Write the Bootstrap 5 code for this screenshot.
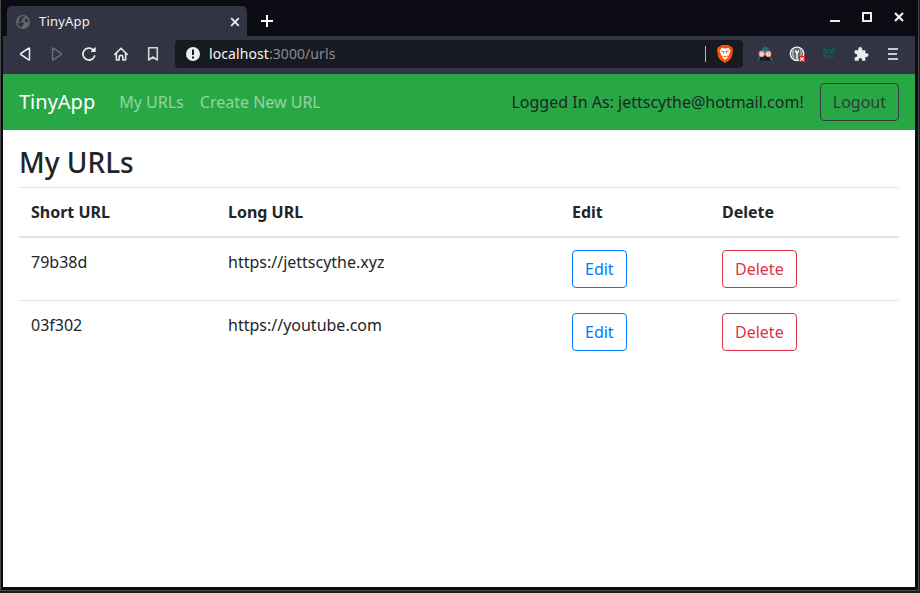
<!DOCTYPE html>
<html lang="en">
<head>
<meta charset="utf-8">
<meta name="viewport" content="width=device-width, initial-scale=1">
<title>TinyApp</title>
<link href="https://cdn.jsdelivr.net/npm/bootstrap@5.3.0/dist/css/bootstrap.min.css" rel="stylesheet">
<style>
body{font-family:"Noto Sans",sans-serif;background:#1c1c1c;color:#212529;line-height:1.5;height:593px;overflow:hidden}
.win{height:591px;width:919px;background:#0b0b14;border:1px solid #48484a;border-top:0;padding:0 3px 3px 2px}
.titlebar{height:36px;padding:6px 10px 0 4px}
.tab{width:240px;height:30px;background:#323443;border-radius:5px 5px 0 0;color:#f2f2f3;font-size:13px;padding:1px 7px 0 9px}
.tabname{padding-left:9px;padding-top:1px;letter-spacing:.2px}
.newtab{margin-left:14px}
.toolbar{height:38px;background:#323443;padding:0 14px 2px}
.address{width:568px;height:28px;background:#181a21;border-radius:4px;margin-left:14px;padding:0 10px 0 11px;font-size:14px;color:#f5f5f6}
.address .url{padding:0 0 1px 9px;letter-spacing:.08px}
.address .dim{color:#8b8c91}
.sep{width:1px;height:16px;background:#b6b6ba;margin-right:11px}
.tools{gap:16px}
svg{display:block;flex:none}
.page{height:513px;background:#fff}
.topnav{height:56px;background:#28a745}
.topnav .navbar-brand{font-size:20px;color:#fff;padding:0;margin-right:16px}
.topnav .nav-link{color:rgba(255,255,255,.5);padding:8px}
.btn{--bs-btn-border-radius:4px;--bs-btn-font-size:16px;--bs-btn-line-height:1.5}
.btn-outline-dark{--bs-btn-color:#343a40;--bs-btn-border-color:#343a40}
.btn-outline-primary{--bs-btn-color:#007bff;--bs-btn-border-color:#007bff}
.title{font-size:28px;font-weight:500;line-height:1.2;margin:0;padding:16px 0 7px;height:57px}
.urls{border-collapse:separate;border-spacing:0;table-layout:fixed;width:880px;--bs-table-color:#212529;--bs-table-bg:#fff}
.urls th,.urls td{padding:12px!important;vertical-align:top;border:0 solid #dee2e6!important}
.urls th{border-width:1px 0 2px!important}
.urls tr+tr td{border-top-width:1px!important}
</style>
<script src="https://cdn.jsdelivr.net/npm/bootstrap@5.3.0/dist/js/bootstrap.bundle.min.js"></script>
</head>
<body>
<div class="win">
  <div class="titlebar d-flex justify-content-between">
    <div class="d-flex">
      <div class="tab d-flex align-items-center">
        <svg width="14" height="14" viewBox="0 0 14 14"><circle cx="7" cy="7" r="7" fill="#65676c"/><path d="M5.8 1.3 8.8 1.5 8.2 3 6.5 3.6 6.7 5 5 6 4.6 7.3 7.4 7.6 8.2 9 6.6 10 6 12.7C3.6 12 1.6 10 1.3 7.3L3.5 8.5 4.2 7.7 2.5 5.8C2.7 3.6 4 2 5.8 1.3ZM9 4.4 11 3.2 12.6 6.5 11 7.8 9.2 6.8 8.3 5.5Z" fill="#323443"/></svg>
        <span class="flex-grow-1 tabname">TinyApp</span>
        <svg width="10" height="10" viewBox="0 0 10 10" stroke="#eeeef0" stroke-width="1.8"><path d="M1.2 1.2 8.8 8.8M8.8 1.2 1.2 8.8"/></svg>
      </div>
      <svg class="align-self-center newtab" width="12" height="12" viewBox="0 0 12 12" stroke="#fff" stroke-width="2"><path d="M6 0V12M0 6H12"/></svg>
    </div>
    <svg width="76" height="22" viewBox="0 0 76 22" stroke="#eeeef2" fill="none" stroke-width="2"><path d="M1 15H11M34 7H42V15H34Z"/><path d="M66 7 74 15M74 7 66 15" stroke-width="2.2"/></svg>
  </div>
  <div class="toolbar d-flex align-items-center">
    <div class="d-flex align-items-center tools">
      <svg width="16" height="16" viewBox="0 0 16 16" fill="none" stroke="#eeeef0" stroke-width="1.5" stroke-linejoin="round"><path d="M12.5 2.4V13.6Q12.5 14.3 11.8 13.8L3.8 8.5Q3.1 8 3.8 7.5L11.8 2.2Q12.5 1.7 12.5 2.4Z"/></svg>
      <svg width="16" height="16" viewBox="0 0 16 16" fill="none" stroke="#6d6e79" stroke-width="1.5" stroke-linejoin="round"><path d="M3.6 2.4V13.6Q3.6 14.3 4.3 13.8L12.2 8.5Q12.9 8 12.2 7.5L4.3 2.2Q3.6 1.7 3.6 2.4Z"/></svg>
      <svg width="16" height="16" viewBox="0 0 16 16" fill="none" stroke="#eeeef0" stroke-width="1.7" stroke-linecap="round"><path d="M12.2 3.8A6 6 0 1 0 13.6 10"/><path d="M10.4 5.5H14.2V2Z" fill="#eeeef0" stroke-width="1"/></svg>
      <svg width="16" height="16" viewBox="0 0 16 16" fill="none" stroke="#e4e4e7" stroke-width="1.6" stroke-linejoin="round" stroke-linecap="round"><path d="M1.8 8.4 8 2.2 14.2 8.4M3.4 7.5V14H6.2V10.8Q6.2 9.4 8 9.4T9.8 10.8V14H12.6V7.5"/></svg>
      <svg width="16" height="16" viewBox="0 0 16 16" fill="none" stroke="#d6d6da" stroke-width="1.6" stroke-linejoin="round"><path d="M3.7 1.8H12.3V14L8 11 3.7 14Z"/></svg>
    </div>
    <div class="address d-flex align-items-center">
      <svg width="14" height="14" viewBox="0 0 14 14"><circle cx="7" cy="7" r="7" fill="#ededee"/><path d="M6 2.5H8V8H6ZM6 9.5H8V11.5H6Z" fill="#181a21"/></svg>
      <div class="flex-grow-1 url">localhost<span class="dim">:3000/urls</span></div>
      <div class="sep"></div>
      <svg width="16" height="18" viewBox="0 0 16 18"><path d="M4.5 0H11.5L13 1.5H14.5L16 4 15 11.5Q14 14.5 8 18 2 14.5 1 11.5L0 4 1.5 1.5H3Z" fill="#fb5304"/><path d="M4.5 3 8 3.6 11.5 3 13.5 6 12 9.4 11.4 11 9.8 10.6 10.8 12.4 8 15 5.2 12.4 6.2 10.6 4.6 11 4 9.4 2.5 6Z" fill="#fff"/><path d="M4.3 6 7 6.6 6.3 8.4M11.7 6 9 6.6 9.7 8.4M6.6 11.6H9.4" stroke="#fb5304" fill="none"/></svg>
    </div>
    <div class="d-flex align-items-center tools ms-auto">
      <svg width="16" height="16" viewBox="0 0 16 16"><path d="M8.5 .5Q11.5 1.4 12.8 5.5L13.5 10 15.8 15H.2L2.5 10 3.2 5.5Q4.5 2 8.5 .5Z" fill="#2b6779"/><path d="M4.5 9H11.5L14 14.8H2Z" fill="#11151d"/><g fill="#fff" stroke="#e58a76" stroke-width="1.3"><circle cx="4.7" cy="8" r="2.5"/><circle cx="11.3" cy="8" r="2.5"/></g><path d="M4.2 8H5.2M10.8 8H11.8" stroke="#333"/><path d="M6 13H10" stroke="#59616a" stroke-dasharray="1 1"/></svg>
      <svg width="16" height="16" viewBox="0 0 16 16"><circle cx="8" cy="7.8" r="6.7" fill="#606368" stroke="#f2f2f2" stroke-width="1.4"/><path d="M4.4 3.5Q2.7 8 5 12.5M11.6 3.5Q13 7 11.4 10" stroke="#aaa" stroke-width="1.6" fill="none"/><path d="M6 6 6.2 3.6 8 5.5 9.8 3.6 10 6 8.8 7.5V13.5H7.2V7.5Z" fill="#eee"/><path d="M10 10H16V16H10Z" fill="#ed1c24"/><path d="M11.3 11.3 14.7 14.7M14.7 11.3 11.3 14.7" stroke="#fff" stroke-width="1.2"/></svg>
      <svg width="16" height="16" viewBox="0 0 16 16" fill="none" stroke="#08805a" stroke-width="1.1" stroke-dasharray="1.3 .9"><path d="M3 7V2.5L6 4.5H10L13 2.5V7M2.8 8.5 4.5 11 8 12.5 11.5 11 13.2 8.5M4.5 6 6.8 7.5M11.5 6 9.2 7.5M6.5 10H9.5"/></svg>
      <svg width="16" height="16" viewBox="0 0 16 16"><path d="M1.7 4.2H5.2V3A2 2 0 0 1 9.2 3V4.2H12.4V7.2H13.6A1.9 1.9 0 0 1 13.6 11H12.4V14.8H9V13.8A1.7 1.7 0 0 0 5.6 13.8V14.8H1.7V11.2H2.5A1.7 1.7 0 0 0 2.5 7.8H1.7Z" fill="#ececee"/></svg>
      <svg width="16" height="16" viewBox="0 0 16 16" stroke="#c9c9cd" stroke-width="2"><path d="M3 3H13M3 8H12M3 13H13"/></svg>
    </div>
  </div>
  <div class="page">
    <nav class="topnav navbar navbar-expand p-0 px-3">
      <a class="navbar-brand" href="#">TinyApp</a>
      <div class="navbar-nav me-auto">
        <a class="nav-link" href="#">My URLs</a>
        <a class="nav-link" href="#">Create New URL</a>
      </div>
      <span>Logged In As: jettscythe@hotmail.com!</span>
      <button class="btn btn-outline-dark ms-3">Logout</button>
    </nav>
    <main class="px-3">
      <h3 class="title">My URLs</h3>
      <table class="table urls">
        <colgroup><col style="width:197px"><col style="width:344px"><col style="width:150px"><col style="width:189px"></colgroup>
        <thead><tr><th>Short URL</th><th>Long URL</th><th>Edit</th><th>Delete</th></tr></thead>
        <tbody>
          <tr><td>79b38d</td><td>https://jettscythe.xyz</td><td><button class="btn btn-outline-primary">Edit</button></td><td><button class="btn btn-outline-danger">Delete</button></td></tr>
          <tr><td>03f302</td><td>https://youtube.com</td><td><button class="btn btn-outline-primary">Edit</button></td><td><button class="btn btn-outline-danger">Delete</button></td></tr>
        </tbody>
      </table>
    </main>
  </div>
</div>
</body>
</html>
